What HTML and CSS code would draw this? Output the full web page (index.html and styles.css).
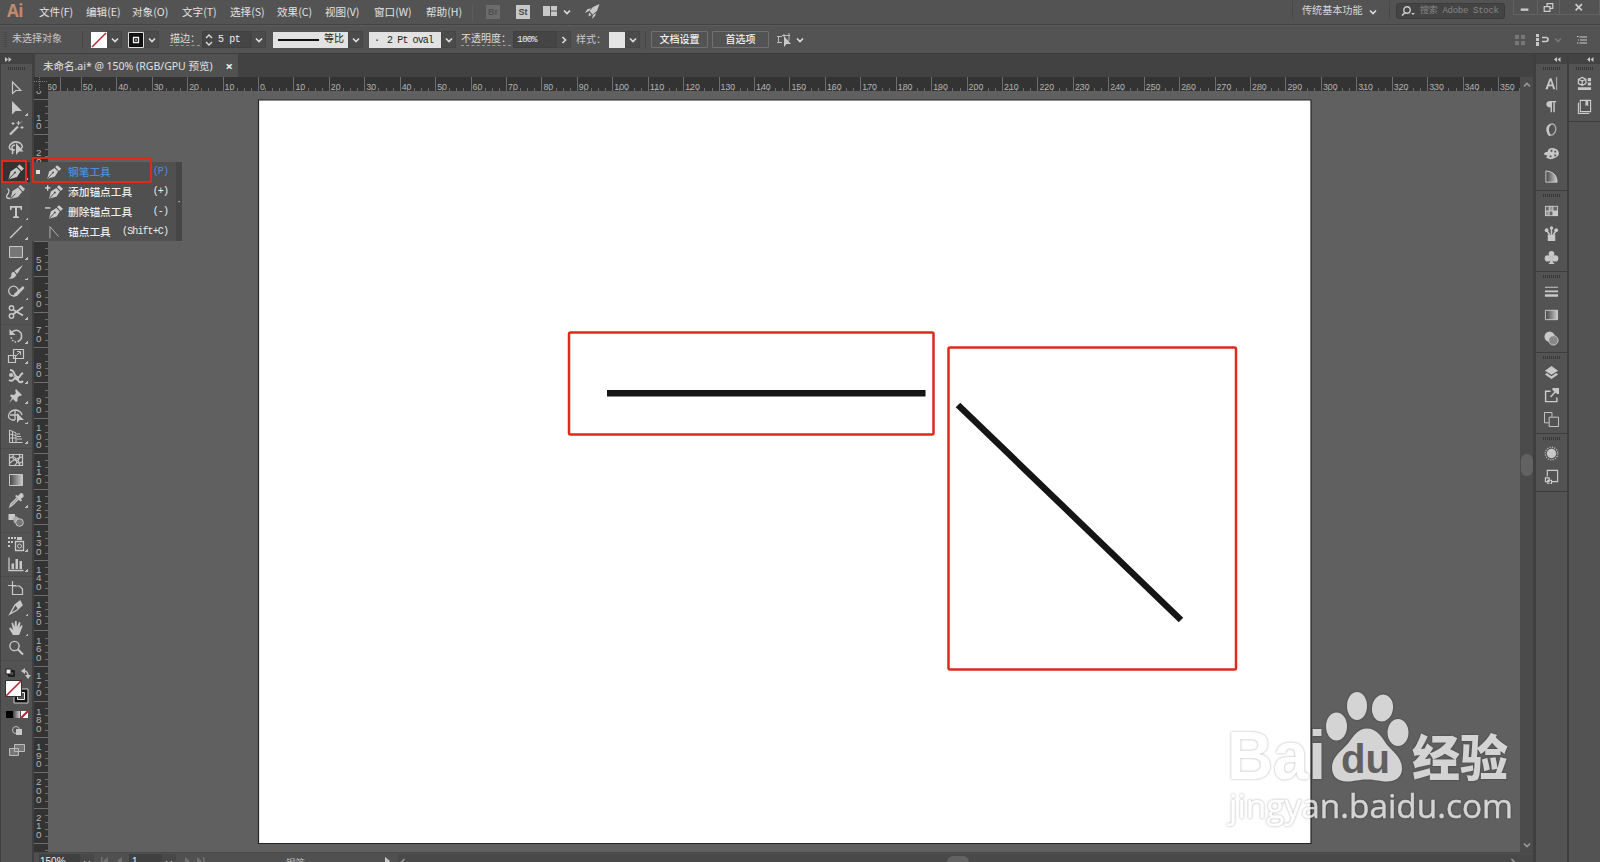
FILE: index.html
```html
<!DOCTYPE html>
<html lang="zh-CN">
<head>
<meta charset="utf-8">
<title>未命名.ai</title>
<link rel="stylesheet" href="styles.css">
</head>
<body>
<svg class="defs" width="0" height="0">
  <symbol id="chev" viewBox="0 0 8 8"><path d="M1 2.500 4 5.500 7 2.500" fill="none" stroke="currentColor" stroke-width="1.600"/></symbol>
  <symbol id="pen" viewBox="0 0 20 20"><path d="M2.500 17.500 4.500 9.500 10.500 5.500 14.500 9.500 11 15Z M11.300 4.500 13.500 2.500 18 6.500 15.500 9Z"/><path d="M3 17 8.500 11" stroke="#444" stroke-width="1"/><circle cx="9" cy="10.500" r="1" fill="#444"/></symbol>
</svg>
<div class="app">
  <header class="menubar">
    <b class="logo">Ai</b>
    <nav class="menus">
      <span class="m47">文件(F)</span><span class="m46">编辑(E)</span><span class="m50">对象(O)</span><span class="m48">文字(T)</span><span class="m47">选择(S)</span><span class="m48">效果(C)</span><span class="m49">视图(V)</span><span class="m52">窗口(W)</span><span class="m46">帮助(H)</span>
    </nav>
    <i class="vsep"></i>
    <span class="badge dim">Br</span>
    <span class="badge">St</span>
    <svg class="arrange" viewBox="0 0 14 10"><path d="M0 0h7v10H0zM8 0h6v4.500H8zM8 5.500h6V10H8z"/></svg>
    <svg class="chev arrange-chev"><use href="#chev"/></svg>
    <svg class="rocket" viewBox="0 0 15 15"><path d="M14.500 0 8 3 4.500 7 7.500 10.500 12 7ZM6 4 2 5.500 0 9 4 7ZM11 9 10 12 7 15 8 11ZM4 8.500 6.500 11 3.500 12.500Z"/></svg>
    <div class="workspace"><span>传统基本功能</span><svg class="chev"><use href="#chev"/></svg></div>
    <div class="search"><svg viewBox="0 0 14 10"><circle cx="6" cy="4" r="3.200" fill="none" stroke="#ccc" stroke-width="1.400"/><path d="M4 6.500 1 9.500" stroke="#ccc" stroke-width="1.600"/><path d="M10 7h4l-2 2z"/></svg><span>搜索 Adobe Stock</span></div>
    <div class="win">
      <svg class="min" viewBox="0 0 24 15"><path d="M7 8.500h8v2.500H7z"/></svg>
      <svg class="max" viewBox="0 0 22 15"><path d="M6.500 6.500h6v5h-6zM9.500 6V3.500h6v5H13" fill="none" stroke="#ccc" stroke-width="1.300"/></svg>
      <svg class="cls" viewBox="0 0 40 15"><path d="M16 4 22.500 10.500M22.500 4l-6.500 6.500" stroke="#ccc" stroke-width="1.700"/></svg>
    </div>
  </header>

  <section class="controls">
    <i class="drag"></i>
    <span class="selection">未选择对象</span>
    <i class="csep"></i>
    <svg class="swatch fill-swatch" viewBox="0 0 16 16"><path fill="#fff" d="M0 0h16v16H0z"/><path d="M1 15 15 1" stroke="#b8252b" stroke-width="1.500"/></svg>
    <span class="drop"><svg class="chev"><use href="#chev"/></svg></span>
    <svg class="swatch stroke-swatch" viewBox="0 0 16 16"><path fill="#111" stroke="#ddd" d="M.5.5h15v15H.5z"/><path fill="#111" stroke="#eee" stroke-width="1.300" d="M5.500 5.500h5v5h-5z"/><path d="M7 8h2" stroke="#ddd"/></svg>
    <span class="drop"><svg class="chev"><use href="#chev"/></svg></span>
    <span class="label weight-label">描边：</span>
    <div class="field weight"><svg viewBox="0 0 8 14"><path d="M1 5 4 2 7 5M1 9 4 12 7 9" fill="none" stroke="#ddd" stroke-width="1.400"/></svg><span>5 pt</span></div>
    <span class="drop"><svg class="chev"><use href="#chev"/></svg></span>
    <div class="light profile"><i></i><span>等比</span></div>
    <span class="drop"><svg class="chev"><use href="#chev"/></svg></span>
    <div class="light brush"><span>·</span><span>2 Pt oval</span></div>
    <span class="drop"><svg class="chev"><use href="#chev"/></svg></span>
    <span class="label opacity-label">不透明度：</span>
    <div class="field opacity">100%</div>
    <span class="drop"><svg class="chev turn"><use href="#chev"/></svg></span>
    <span class="style-label">样式：</span>
    <i class="style-swatch"></i>
    <span class="drop"><svg class="chev"><use href="#chev"/></svg></span>
    <i class="csep near"></i>
    <span class="btn first">文档设置</span>
    <span class="btn">首选项</span>
    <svg class="similar" viewBox="0 0 15 14"><path d="M0 3.500h5M0 9.500h5M1.500 3.500v6M5 2.500h8M7 1v3M12 0v5M12 5v3" fill="none" stroke="#bbb"/><path d="M7 3v11l2.500-3H14Z"/></svg>
    <svg class="chev similar-chev"><use href="#chev"/></svg>
    <div class="controls-right">
      <svg class="snap" viewBox="0 0 10 10"><path fill="#777" d="M0 0h4v4H0zM6 0h4v4H6zM0 6h4v4H0zM6 6h4v4H6z"/></svg>
      <svg class="dock-pos" viewBox="0 0 13 12"><path d="M0 0h3v3H0zM0 4h3v3H0zM0 8h3v4H0z"/><path d="M6 3.500h4q2 0 2 2t-2 2H6" fill="none" stroke="#ccc" stroke-width="1.600"/></svg>
      <svg class="chev faint"><use href="#chev"/></svg>
      <svg class="list" viewBox="0 0 10 8"><path d="M0 .5h1.500M2.500 1H10M1 4h1M3 4h7M0 7h1.500M2.500 7H10" stroke="#ccc" stroke-width="1.200"/></svg>
    </div>
  </section>

  <main class="body">
    <aside class="tools">
      <div class="head left"><svg viewBox="0 0 7 5"><path d="M0 0 3 2.500 0 5zM3.500 0l3 2.500-3 2.500z"/></svg></div>
      <div class="grip tool-grip"><i></i></div>
      <div class="group">
        <span class="tool"><svg viewBox="0 0 20 20"><path d="M6.500 4v11.500l3.300-3h5Z" fill="none" stroke="#c8c8c8" stroke-width="1.200"/></svg></span>
        <span class="tool more"><svg viewBox="0 0 20 20"><path d="M6 3v13.500l3.500-3.500H16Z"/></svg></span>
        <span class="tool"><svg viewBox="0 0 20 20"><path d="M4 16.500 12 8.500" stroke="#c8c8c8" stroke-width="2.200"/><path d="M12.500 3v4M10.500 5h4M16 8v3M14.500 9.500h3M7 4v3M5.500 5.500h3M16 3.500l-1 1" stroke="#c8c8c8"/></svg></span>
        <span class="tool"><svg viewBox="0 0 20 20"><path d="M9 12H6Q2 11 4 7q4-5 10-2 4 3 1 6M7 12q-3-4 2-5M5 11q3 2 1 5" fill="none" stroke="#c8c8c8" stroke-width="1.500"/><path d="M10 5v12l3-3.500h4.500Z"/></svg></span>
      </div>
      <div class="group">
        <span class="tool more on"><svg><use href="#pen"/></svg></span>
        <span class="tool"><svg viewBox="0 0 20 20"><path d="M1.500 6.500q3 2 0 6t3 4" fill="none" stroke="#c8c8c8" stroke-width="1.300"/><path d="M4.500 17 6.500 9 12 5.500 16 10 12 15ZM12.500 4.500l2-1.500L19 7 17 9.500Z"/><path d="M5 16.500l4.500-5" stroke="#444"/></svg></span>
        <span class="tool more"><svg viewBox="0 0 20 20"><path d="M4 4h12v4h-1.200l-.7-2.300H11V14l2 .7V16H7v-1.300L9 14V5.700H6L5.300 8H4Z"/></svg></span>
        <span class="tool more"><svg viewBox="0 0 20 20"><path d="M4 16 16 4" stroke="#c8c8c8" stroke-width="1.400"/></svg></span>
        <span class="tool more"><svg viewBox="0 0 20 20"><path d="M3.500 4.500h13v11h-13z" fill="#777" stroke="#c8c8c8"/></svg></span>
        <span class="tool more"><svg viewBox="0 0 20 20"><path d="M17 3 8.500 9l2.500 3ZM8 10l2.500 3Q8 17.500 2.500 16.500q3-1 2.800-4T8 10Z"/></svg></span>
        <span class="tool more"><svg viewBox="0 0 20 20"><circle cx="7.500" cy="9" r="4.800" fill="none" stroke="#c8c8c8" stroke-width="1.300"/><path d="M17 4 8.500 11.500 7 15l4-1L18.500 6Z"/></svg></span>
        <span class="tool more"><svg viewBox="0 0 20 20"><path d="M7.500 8 17 13.500M7.500 12 17 5" stroke="#c8c8c8" stroke-width="1.800"/><circle cx="5.500" cy="6" r="2.200" fill="none" stroke="#c8c8c8" stroke-width="1.400"/><circle cx="5.500" cy="14" r="2.200" fill="none" stroke="#c8c8c8" stroke-width="1.400"/></svg></span>
      </div>
      <div class="group">
        <span class="tool more"><svg viewBox="0 0 20 20"><path d="M6 6q5-4 9 1 2 5-2 8" fill="none" stroke="#c8c8c8" stroke-width="1.500"/><path d="M13 15q-6 3-8-4" fill="none" stroke="#c8c8c8" stroke-width="1.500" stroke-dasharray="1.500 1.500"/><path d="M3.500 3v6h6Z"/></svg></span>
        <span class="tool more"><svg viewBox="0 0 20 20"><path d="M2.500 9.500h7v7h-7zM7.500 3.500h10v9h-10z" fill="none" stroke="#c8c8c8" stroke-width="1.200"/><path d="M9 11l5-5M11 5.500h3.500V9" fill="none" stroke="#c8c8c8"/></svg></span>
        <span class="tool more"><svg viewBox="0 0 20 20"><path d="M4 4q3 0 4 3t3 4 3-1 3-3M3 14q3 2 5-1t4 1 5 1" fill="none" stroke="#c8c8c8" stroke-width="2"/><circle cx="5" cy="9" r="2"/><circle cx="11" cy="12.500" r="2"/><path d="M5 8l7 6" stroke="#c8c8c8"/></svg></span>
        <span class="tool more"><svg viewBox="0 0 20 20"><path d="M10 3l6 6-1.500 1-1-.3-2 2.300v3L10 16l-3-3-4 4 3-5-2-2 1-1.500 3 .5L10 7l-.8-2.500Z"/></svg></span>
        <span class="tool more"><svg viewBox="0 0 20 20"><path d="M9 14H6Q1 12 3 8q2-4 7-4 5 1 6 5M4 9h9M9 5v9" fill="none" stroke="#c8c8c8" stroke-width="1.300"/><path d="M11 7v10l2.500-3H18Z"/></svg></span>
        <span class="tool more"><svg viewBox="0 0 20 20"><path d="M3.500 4v12.500h13M3.500 4 10 7v9M3.500 8 10 9.500M3.500 12h7M6.500 5v11M11 8h3M11 10.500h4M11 13h5" fill="none" stroke="#c8c8c8"/></svg></span>
      </div>
      <div class="group">
        <span class="tool"><svg viewBox="0 0 20 20"><path d="M3.500 4.500h13v11h-13zM4 8q5-3 6 2t6 2M8 4q-3 4 1 6t-1 6M13 4q2 4-2 7M4 13q4-4 12-6M12 10l2 6" fill="none" stroke="#c8c8c8" stroke-width="1.200"/></svg></span>
        <span class="tool"><svg viewBox="0 0 20 20"><defs><linearGradient id="g"><stop stop-color="#444"/><stop offset="1" stop-color="#ccc"/></linearGradient></defs><path d="M3.500 4.500h13v11h-13z" fill="url(#g)" stroke="#c8c8c8"/></svg></span>
        <span class="tool more"><svg viewBox="0 0 20 20"><path d="M11 8 5 14l-1 2.500L6.500 15l6-6" fill="none" stroke="#c8c8c8" stroke-width="1.400"/><path d="M9 6l1.500-1L12 6q3-5 5-2t-2 4.500l1 2-1.500 1Z"/></svg></span>
        <span class="tool"><svg viewBox="0 0 20 20"><path d="M2.500 4h6.500v6H2.500z"/><path d="M7 8l3-2 4 3-1 5-5-1Z" fill="#aaa"/><circle cx="13.500" cy="12.500" r="3.800" fill="#777" stroke="#c8c8c8"/></svg></span>
      </div>
      <div class="group">
        <span class="tool more"><svg viewBox="0 0 20 20"><path d="M2 3h2v2H2zM5 3h2v2H5zM8 3h2v2H8zM2 7h2v2H2zM5 7h2v2H5zM2 11h2v2H2zM11 3h5v3h-5z"/><path d="M9.500 7.500h8v9h-8z" fill="none" stroke="#c8c8c8" stroke-width="1.300"/><circle cx="13.500" cy="12" r="2" fill="none" stroke="#c8c8c8"/></svg></span>
        <span class="tool more"><svg viewBox="0 0 20 20"><path d="M3 3.500v13h14.500" fill="none" stroke="#c8c8c8" stroke-width="1.300"/><path d="M5.500 9.500H8V15H5.500zM9.500 5H12v10H9.500zM13.500 7H16v8h-2.500z"/></svg></span>
      </div>
      <div class="group">
        <span class="tool"><svg viewBox="0 0 20 20"><path d="M6.500 3v11M2 7.500h8M6.500 8h7l3 3v5.500h-10Z" fill="none" stroke="#c8c8c8" stroke-width="1.200"/></svg></span>
        <span class="tool more"><svg viewBox="0 0 20 20"><path d="M4 16 9 7l5-4 2 4-5 5Z" fill="none" stroke="#c8c8c8" stroke-width="1.400"/><path d="M9 7l5-4 2 4-4 4Z"/></svg></span>
        <span class="tool more"><svg viewBox="0 0 20 20"><path d="M7 17 3 10.500l1.500-1L7 12 5.500 5l1.500-.4L8.500 9 9 3h1.600l.4 6L13 4l1.500.4L13.500 10l2-3 1.200.8L14 15l-1 2Z"/></svg></span>
        <span class="tool"><svg viewBox="0 0 20 20"><circle cx="8.500" cy="8" r="4.600" fill="none" stroke="#c8c8c8" stroke-width="1.400"/><path d="M11.500 11 17 16.500" stroke="#c8c8c8" stroke-width="2"/></svg></span>
      </div>
      <svg class="paint" viewBox="0 0 32 104">
        <path d="M5 7h5v5H5z" fill="#eee" stroke="#222"/><path d="M10 9h3v5H8v-2" fill="none" stroke="#111" stroke-width="1.500"/>
        <path d="M23 9q4 0 4 5" fill="none" stroke="#bbb" stroke-width="1.500"/><path d="M20 9l4-3v6zM24 13h6l-3 4z"/>
        <path d="M13 27h14v14H13z" fill="#111" stroke="#ccc"/><path d="M16.500 30.500h7v7h-7z" fill="#555" stroke="#eee"/>
        <path d="M4.500 18.500h16v16h-16z" fill="#fff" stroke="#333"/><path d="M5 34 20 19" stroke="#b8252b" stroke-width="1.600"/>
        <path d="M5 49h7v7H5z" fill="#000"/><path d="M12 49h7v7h-7z" fill="url(#g)"/><path d="M20 49h7v7h-7z" fill="#fff"/><path d="M20 56l7-7" stroke="#b8252b" stroke-width="2"/>
        <circle cx="15" cy="68" r="3.500" fill="none" stroke="#bbb"/><path d="M15 67h6v6h-6z"/>
        <path d="M8.500 86.500h9v7h-9zM13.500 82.500h10v7h-10z" fill="#777" stroke="#bbb"/>
      </svg>
    </aside>

    <section class="doc">
      <div class="tabs"><div class="tab"><span>未命名.ai* @ 150% (RGB/GPU 预览)</span><b>×</b></div></div>
      <div class="view">
        <svg class="corner" viewBox="0 0 14 14"><path d="M5.500 0v14M0 4.500h14" stroke="#777" stroke-dasharray="1 1"/></svg>
        <svg class="ruler-h" id="rulerH"></svg>
        <svg class="ruler-v" id="rulerV"></svg>
        <div class="canvas">
          <svg viewBox="48 91 1472 761">
            <path d="M258.500 100h1052.500v743.500H258.500z" fill="#fff" stroke="#252525" stroke-width="1.200"/>
            <path d="M607 393.200H925.500M958 405 1181 620" stroke="#151515" stroke-width="6.500"/>
            <g fill="none" stroke="#e0291b" stroke-width="2.500"><rect x="569" y="332.500" width="364.500" height="102" rx="1.500"/><rect x="948.500" y="347.500" width="287.500" height="322" rx="1.500"/></g>
          </svg>
        </div>
        <div class="vscroll"><svg class="chev up"><use href="#chev"/></svg><i></i><svg class="chev"><use href="#chev"/></svg></div>
      </div>
      <footer class="status">
        <span class="zoom">150%</span><span class="sdrop"><svg class="chev"><use href="#chev"/></svg></span>
        <svg class="prev" viewBox="0 0 30 8"><path fill="#707070" d="M0 0h1.500v8H0zM7 0v8L2 4zM21 0v8l-5-4z"/></svg>
        <span class="page">1</span><span class="sdrop"><svg class="chev"><use href="#chev"/></svg></span>
        <svg class="next" viewBox="0 0 30 8"><path fill="#707070" d="M0 0v8l5-4zM12 0v8l5-4zM18 0h1.500v8H18z"/></svg>
        <span class="current">钢笔</span>
        <svg class="play" viewBox="0 0 5 8"><path d="M0 0v8l5-4z"/></svg>
        <div class="hscroll"><svg class="chev back"><use href="#chev"/></svg><i></i><svg class="chev turn"><use href="#chev"/></svg></div>
      </footer>
    </section>

    <aside class="dock">
      <div class="head"><svg viewBox="0 0 7 5"><path d="M3 0v5L0 2.500zM6.500 0v5l-3-2.500z"/></svg></div>
      <div class="panel">
        <div class="grip"><i></i></div>
        <span><svg viewBox="0 0 16 16"><path d="M1.500 14 6 2.500h2L12 14H9.800l-1-3H5l-1 3ZM5.600 9h2.700L7 5Z"/><path d="M13.500 1v14" stroke="#bbb"/></svg></span>
        <span><svg viewBox="0 0 16 16"><path d="M13 2H6Q2.500 2.500 2.500 5.500T7 9v5h1.500V3.500H10V14h1.500V3.500H13Z"/></svg></span>
        <span><svg viewBox="0 0 16 16"><ellipse cx="8" cy="8" rx="4.500" ry="6" transform="rotate(12 8 8)" fill="none" stroke="#aaa" stroke-width="1.500"/><path d="M8 2Q1 3 3 10t4 4Q3 7 8 2Z"/></svg></span>
        <span><svg viewBox="0 0 16 16"><path fill-rule="evenodd" d="M8 2q6 0 7.500 4T13 12t-6 2-5-2l2-1.500L0 9q0-3 4-3 0-3.500 4-4ZM7 4v2h2V4ZM11 5v2h2V5ZM11 9v2h2V9ZM6 10v2h2v-2Z"/></svg></span>
        <span><svg viewBox="0 0 16 16"><path d="M2 2q12 1 12 12H2Z" fill="url(#g)" stroke="#ccc"/></svg></span>
      </div>
      <div class="panel">
        <div class="grip"><i></i></div>
        <span><svg viewBox="0 0 16 16"><path d="M1 3h14v11H1z"/><path fill="#666" d="M2 4h3v4H2zM10 4h4v4h-4zM6 9h3v4H6z"/><path fill="#999" d="M6 4h3v4H6zM2 9h3v4H2z"/></svg></span>
        <span><svg viewBox="0 0 16 16"><path d="M4 9h8v7H4z"/><path d="M8 9V2M6 9 3 5M10 9l3-4" stroke="#c8c8c8" stroke-width="1.600"/><circle cx="13" cy="4.500" r="2"/><circle cx="8" cy="2" r="1.800"/><circle cx="2.800" cy="4.500" r="2"/></svg></span>
        <span><svg viewBox="0 0 16 16"><circle cx="8" cy="4" r="3"/><circle cx="4" cy="9" r="3.300"/><circle cx="12" cy="9" r="3.300"/><path d="M7 5h2l.5 8 2 2h-7l2-2Z"/></svg></span>
      </div>
      <div class="panel">
        <div class="grip"><i></i></div>
        <span><svg viewBox="0 0 16 16"><path d="M1 3h14v1H1zM1 7h14v1.700H1zM1 11h14v2.500H1z"/></svg></span>
        <span><svg viewBox="0 0 16 16"><path d="M1.500 3.500h13v10h-13z" fill="url(#g)" stroke="#ccc"/></svg></span>
        <span><svg viewBox="0 0 16 16"><circle cx="6" cy="6" r="5.500"/><circle cx="10" cy="10" r="5" fill="#888" stroke="#ccc"/></svg></span>
      </div>
      <div class="panel">
        <div class="grip"><i></i></div>
        <span><svg viewBox="0 0 16 16"><path d="M8 1l7 5-7 4.500L1 6ZM1 10l2-1.500 5 3.500 5-3.500L15 10l-7 5Z"/></svg></span>
        <span><svg viewBox="0 0 16 16"><path d="M7 3.500H1.700v11h12V10M7 9.500 13 3" fill="none" stroke="#ccc" stroke-width="1.500"/><path d="M9 0h7v6.500h-2L9 2Z"/></svg></span>
        <span><svg viewBox="0 0 16 16"><path d="M5 11.500H.5v-11h8V5M5.500 5.500h10v10h-10z" fill="none" stroke="#ccc"/></svg></span>
      </div>
      <div class="panel">
        <div class="grip"><i></i></div>
        <span><svg viewBox="0 0 16 16"><circle cx="8" cy="8" r="5"/><circle cx="8" cy="8" r="6.700" fill="none" stroke="#bbb" stroke-width="1.300" stroke-dasharray="1.300 1.300"/></svg></span>
        <span><svg viewBox="0 0 16 16"><path d="M3.500 8V1.500h11v12H8M1.500 9.500h4v4h-4zM4 12h4v4H4z" fill="none" stroke="#ccc" stroke-width="1.200"/></svg></span>
      </div>
    </aside>
    <aside class="dock second">
      <div class="head"><svg viewBox="0 0 7 5"><path d="M3 0v5L0 2.500zM6.500 0v5l-3-2.500z"/></svg></div>
      <div class="panel">
        <div class="grip"><i></i></div>
        <span><svg viewBox="0 0 16 16"><path d="M5.500 1.500l4 2v4.500l-4 2-4-2V3.500ZM1.500 3.500l4 2 4-2M5.500 5.500V10" fill="none" stroke="#ccc" stroke-width="1.300"/><path d="M11.500 2H15v3.500h-3.500zM11.500 7H15v3h-3.500zM1 12h14v3H1z"/></svg></span>
        <span><svg viewBox="0 0 16 16"><path d="M3.500 1.500h11v12h-11zM1.500 4v11.500H13" fill="none" stroke="#ccc" stroke-width="1.200"/><path d="M9 2h3v6l-1.500-1.500L9 8Z"/></svg></span>
      </div>
    </aside>
  </main>

  <div class="flyout">
    <ul>
      <li class="current-tool"><i></i><svg><use href="#pen"/></svg><span>钢笔工具</span><em>(P)</em></li>
      <li><i></i><svg viewBox="0 0 20 20"><g transform="translate(2 0)"><use href="#pen" width="20" height="20"/></g><path d="M0 5.500h6M3 2.500v6" stroke="#ddd" stroke-width="1.400"/></svg><span>添加锚点工具</span><em>(+)</em></li>
      <li><i></i><svg viewBox="0 0 20 20"><g transform="translate(2 0)"><use href="#pen" width="20" height="20"/></g><path d="M0 5.500h6" stroke="#ddd" stroke-width="1.400"/></svg><span>删除锚点工具</span><em>(-)</em></li>
      <li><i></i><svg viewBox="0 0 20 20"><path d="M5.500 17V4L15 15" fill="none" stroke="#bbb"/></svg><span>锚点工具</span><em>(Shift+C)</em></li>
    </ul>
    <div class="tear">·</div>
  </div>
  <i class="mark mark-tool"></i>
  <i class="mark mark-item"></i>

  <svg class="watermark" viewBox="1220 685 300 145">
    <g class="wm-ink">
      <text class="wm-brand" x="1227" y="779" textLength="99" lengthAdjust="spacingAndGlyphs">Bai</text>
      <ellipse cx="1336.500" cy="726.500" rx="10.500" ry="14"/><ellipse cx="1357" cy="706" rx="10" ry="14"/><ellipse cx="1382.500" cy="708" rx="10.500" ry="13.500" transform="rotate(8 1382.500 708)"/><ellipse cx="1398" cy="732.500" rx="10.500" ry="13.500"/>
      <path d="M1367 728.500c9 0 14 7 19 15 5 7 16 13 16 25 0 9-7 13-15 13-7 0-12-2-20-2s-13 2-20 2c-9 0-15-5-15-14 0-11 10-17 16-24 6-8 10-15 19-15Z"/>
      <text class="wm-cn" x="1412" y="776" textLength="96" lengthAdjust="spacingAndGlyphs">经验</text>
      <text class="wm-url" x="1229" y="818" textLength="284" lengthAdjust="spacingAndGlyphs">jingyan.baidu.com</text>
    </g>
    <text class="wm-du" x="1341" y="773" textLength="49" lengthAdjust="spacingAndGlyphs">du</text>
  </svg>
</div>
<script src="rulers.js"></script>
</body>
</html>
```

FILE: styles.css
```css
* { box-sizing: border-box; }
body { margin: 0; background: #535353; }
i, em { font-style: normal; }
svg { display: block; fill: #c8c8c8; flex: none; }
.defs { position: absolute; }

.app {
  position: relative;
  display: flex;
  flex-direction: column;
  width: 1600px;
  height: 862px;
  overflow: hidden;
  background: #535353;
  color: #d8d8d8;
  font: 11px/14px "Liberation Sans", "Noto Sans CJK SC", sans-serif;
  white-space: nowrap;
}
.chev { width: 8px; height: 8px; color: #ddd; }
.turn { transform: rotate(-90deg); }
.back { transform: rotate(90deg); }
.up { transform: rotate(180deg); }

/* Menu bar */
.menubar { display: flex; align-items: center; height: 25px; flex: none; border-bottom: 1px solid #424242; }
.logo { width: 32px; margin-top: -3px; padding-left: 7px; color: #c08a6c; font: bold 17px/22px "Open Sans", sans-serif; letter-spacing: -.5px; }
.menus { display: flex; margin: -1px 0 0 7px; font-family: "Noto Sans CJK SC", sans-serif; color: #e2e2e2; font-size: 10.600px; }
.m46 { width: 46px; } .m47 { width: 47px; } .m48 { width: 48px; } .m49 { width: 49px; } .m50 { width: 50px; } .m52 { width: 52px; }
.vsep { width: 1px; height: 17px; background: #484848; border-right: 1px solid #5b5b5b; }
.badge { width: 14px; height: 14px; margin-left: 13px; background: #c8c8c8; color: #444; text-align: center; font: bold 9px/14px "Liberation Sans", sans-serif; }
.badge + .badge { margin-left: 16px; }
.badge.dim { background: #6c6c6c; color: #505050; }
.arrange { width: 14px; height: 10px; margin: -2px 0 0 13px; }
.arrange-chev { margin: -1px 0 0 6px; }
.rocket { width: 15px; height: 15px; margin: -1px 0 0 14px; }
.workspace { display: flex; align-items: center; gap: 6px; height: 18px; width: 98px; margin: -4px 0 0 auto; padding-left: 9px; border-left: 1px solid #484848; border-right: 1px solid #484848; font: 10.100px/14px "Noto Sans CJK SC", sans-serif; }
.workspace .chev { margin-top: 3px; }
.search { display: flex; align-items: center; gap: 5px; width: 109px; height: 16px; margin: -2px 8px 0 6px; padding-left: 4px; background: #444; border: 1px solid #3b3b3b; border-radius: 3px; color: #858585; font: 9px/12px "Liberation Mono", "Noto Sans CJK SC", monospace; letter-spacing: -.3px; }
.search svg { width: 14px; height: 10px; }
.win { display: flex; align-self: flex-start; height: 15px; width: 88px; border: 1px solid #626262; border-top: 0; margin-right: -1px; }
.min, .max, .cls { height: 15px; border-right: 1px solid #626262; }
.min { width: 24px; } .max { width: 22px; } .cls { width: 40px; }

/* Control bar */
.controls { display: flex; align-items: center; height: 29px; flex: none; border-top: 1px solid #5b5b5b; border-bottom: 1px solid #3d3d3d; }
.drag { width: 3px; height: 16px; margin-left: 4px; background: repeating-linear-gradient(#484848 0 1px, transparent 1px 2px); }
.selection { width: 70px; margin-left: 5px; color: #c8c8c8; font-size: 10px; margin-top: -2px; }
.csep { width: 1px; height: 18px; background: #484848; }
.csep.near { margin-left: 5px; }
.swatch { width: 16px; height: 16px; }
.fill-swatch { margin-left: 8px; }
.stroke-swatch { margin-left: 6px; }
.drop { display: flex; align-items: center; justify-content: center; width: 15px; height: 17px; background: #4b4b4b; border: 1px solid #464646; }
.label { color: #ddd; font-size: 10px; border-bottom: 1px dashed #999; line-height: 12px; }
.weight-label { width: 30px; margin-left: 11px; }
.field { display: flex; align-items: center; height: 17px; background: #454545; border: 1px solid #404040; color: #eee; font: 10px/13px "Liberation Mono", monospace; }
.weight { width: 49px; margin-left: 2px; gap: 5px; padding-left: 2px; letter-spacing: -.4px; }
.weight svg { width: 8px; height: 14px; }
.light { display: flex; align-items: center; height: 16px; background: #e2e2e2; color: #222; font: 10px/14px "Liberation Mono", "Noto Sans CJK SC", monospace; }
.profile { width: 75px; margin-left: 7px; padding-left: 5px; gap: 5px; }
.profile i { width: 41px; height: 2px; background: #111; }
.brush { width: 72px; margin-left: 6px; padding: 2px 0 0 5px; gap: 8px; font: 10px/14px "Liberation Mono", monospace; letter-spacing: -.9px; }
.brush span + span { letter-spacing: -.9px; }
.opacity-label { width: 50px; margin-left: 5px; font-size: 10px; }
.opacity { width: 43px; margin-left: 2px; padding-left: 3px; font-size: 9.500px; letter-spacing: -.8px; }
.style-label { width: 30px; margin-left: 5px; color: #c8c8c8; font-size: 10px; }
.style-swatch { width: 16px; height: 16px; margin-left: 3px; background: #e4e4e4; }
.btn { width: 57px; height: 17px; margin-left: 4px; border: 1px solid #707070; border-radius: 1px; color: #f0f0f0; font-size: 10px; font-weight: 500; line-height: 16px; text-align: center; }
.btn.first { margin-left: 5px; }
.similar { width: 15px; height: 14px; margin-left: 8px; }
.similar-chev { margin-left: 4px; }
.controls-right { display: flex; align-items: center; margin-left: auto; padding-right: 13px; }
.snap { width: 10px; height: 10px; }
.dock-pos { width: 13px; height: 12px; margin-left: 11px; }
.faint { color: #777; margin-left: 5px; }
.list { width: 10px; height: 8px; margin-left: 15px; }

/* Body */
.body { display: flex; flex: 1; min-height: 0; background: #3f3f3f; }
.tools { width: 34px; background: #535353; border-left: 1px solid #404040; border-right: 2px solid #404040; }
.head { display: flex; align-items: center; justify-content: flex-end; height: 10px; padding-right: 6px; background: #434343; }
.head.left { justify-content: flex-start; padding-left: 4px; }
.head svg { width: 7px; height: 5px; }
.grip { display: flex; align-items: center; justify-content: center; height: 8px; }
.grip i { width: 17px; height: 3px; background: repeating-linear-gradient(90deg, #383838 0 1px, transparent 1px 2px); }
.tool-grip { margin-bottom: 6px; }
.group { padding-bottom: 2px; margin-bottom: 1px; border-bottom: 1px solid #4b4b4b; }
.tool { display: flex; align-items: center; justify-content: flex-end; height: 20px; padding-right: 5px; }
.tool svg { width: 20px; height: 20px; margin-right: 1px; }
.more { background: linear-gradient(135deg, transparent 50%, #bbb 50%) 24px 15px / 3px 3px no-repeat; }
.on { background-color: #333; }
.paint { width: 32px; height: 104px; }
.doc { display: flex; flex-direction: column; width: 1499px; height: 818px; flex: none; }
.tabs { height: 23px; padding-left: 1px; background: #424242; flex: none; }
.tab { display: flex; align-items: center; justify-content: space-between; width: 203px; height: 23px; padding: 0 5px 0 8px; background: #515151; color: #e0e0e0; font: 10.500px/14px "Noto Sans", "Noto Sans CJK SC", sans-serif; }
.tab b { font-size: 13px; color: #eee; }
.view { display: grid; grid-template: 14px 761px / 14px 1472px 13px; flex: none; }
.corner, .ruler-h, .ruler-v { width: 100%; height: 100%; background: #333; overflow: hidden; }
.ruler-h, .ruler-v { fill: #b4b4b4; font: 9.800px "Liberation Sans", sans-serif; }
.ruler-h path, .ruler-v path { fill: none; stroke: #6e6e6e; stroke-width: 1; shape-rendering: crispEdges; }
.corner { grid-area: 1 / 1; }
.ruler-h { grid-area: 1 / 2; }
.ruler-v { grid-area: 2 / 1; }
.canvas { grid-area: 2 / 2; background: #606060; }
.canvas svg { width: 1472px; height: 761px; }
.vscroll { grid-area: 1 / 3 / 3 / 4; display: flex; flex-direction: column; align-items: center; justify-content: space-between; padding: 4px 0 3px; background: #4b4b4b; }
.vscroll .chev, .hscroll .chev { color: #999; }
.vscroll i { width: 12px; height: 22px; border-radius: 6px; background: #626262; }
.status { display: flex; align-items: center; height: 20px; flex: none; background: #505050; border-top: 1px solid #484848; font: 10px/14px "Liberation Sans", "Noto Sans CJK SC", sans-serif; }
.zoom { width: 41px; margin-left: 5px; padding-left: 1px; height: 18px; line-height: 16px; background: #404040; color: #eee; }
.sdrop { display: flex; justify-content: center; align-items: center; width: 14px; height: 18px; background: #484848; }
.prev { width: 30px; height: 8px; margin: -3px 0 0 7px; }
.page { width: 33px; height: 18px; margin-left: -2px; padding-left: 3px; line-height: 16px; background: #404040; color: #eee; }
.next { width: 30px; height: 8px; margin: -3px 0 0 9px; }
.current { width: 170px; margin-top: 1px; padding-left: 71px; font-size: 9.500px; color: #bbb; }
.play { width: 5px; height: 8px; margin-top: -3px; }
.hscroll { display: flex; align-items: center; justify-content: space-between; flex: 1; height: 18px; margin-left: 8px; padding: 0 16px 2px 1px; background: #494949; }
.hscroll i { width: 22px; height: 12px; border-radius: 6px; background: #626262; }

/* Panel docks */
.dock { width: 31px; margin-left: 3px; background: #535353; }
.dock.second { width: 31px; margin-left: 2px; }
.panel { padding-bottom: 2px; border-bottom: 1px solid #3d3d3d; }
.panel span { display: flex; align-items: center; justify-content: center; height: 23.300px; }
.panel svg { width: 15px; height: 15px; margin-top: -1px; }

/* Pen tool flyout */
.flyout { position: absolute; left: 30px; top: 162px; display: flex; width: 152px; height: 79px; background: #505050; }
.flyout ul { flex: 1; margin: 0; padding: 0; list-style: none; }
.flyout li { display: flex; align-items: center; height: 20px; padding: 0 8px 0 6px; color: #ececec; font-size: 10.700px; font-weight: 500; }
.flyout li > i { width: 4px; height: 4px; margin-right: 5px; }
.flyout svg { width: 18px; height: 18px; margin-right: 5px; fill: #ccc; }
.flyout em { margin-left: auto; font: 10px/14px "Liberation Mono", monospace; letter-spacing: -.9px; }
.current-tool > i { background: #ddd; }
.flyout .current-tool { color: #4a8fdc; }
.tear { width: 6px; background: #464646; color: #ddd; line-height: 79px; text-align: center; }
.mark { position: absolute; border: 2px solid #e0291b; border-radius: 1px; }
.mark-tool { left: 1px; top: 160px; width: 26px; height: 23px; }
.mark-item { left: 32px; top: 157px; width: 120px; height: 26px; }

/* Watermark */
.watermark { position: absolute; left: 1220px; top: 685px; width: 300px; height: 145px; }
.wm-ink { fill: #fff; opacity: .73; filter: drop-shadow(0 0 1px rgba(0, 0, 0, .45)); }
.wm-brand { font: bold 68px "Liberation Sans", sans-serif; }
.wm-cn { font: 900 49px "Noto Sans CJK SC", sans-serif; }
.wm-url { font: 32px "Open Sans", sans-serif; stroke: #fff; stroke-width: .4px; }
.wm-du { font: bold 41px "Liberation Sans", sans-serif; fill: #606060; }
```

FILE: rulers.js
```js
// Ruler ticks: one labelled division is 10 mm, split into five.
const STEP = 35.43;
const H_ZERO = 210.5;
const V_ZERO = 8.5;

function horizontal() {
  let ticks = '', labels = '';
  for (let n = -5; n <= 35; n++) {
    const x = H_ZERO + n * STEP;
    ticks += `M${x} 0V14`;
    for (let k = 1; k < 5; k++) ticks += `M${x + k * STEP / 5} 11V14`;
    labels += `<text x="${x + 1.5}" y="12.5" textLength="${String(Math.abs(n * 10)).length * 4.9}" lengthAdjust="spacingAndGlyphs">${Math.abs(n * 10)}</text>`;
  }
  ticks += 'M5 11V14M12 0V14M19 11V14M26 11V14';
  labels += '<text x="-1" y="12.5" textLength="9.8" lengthAdjust="spacingAndGlyphs">60</text>';
  document.getElementById('rulerH').innerHTML = `<path d="${ticks}"/>${labels}`;
}

function vertical() {
  let ticks = '', labels = '';
  for (let n = 0; n <= 21; n++) {
    const y = V_ZERO + n * STEP;
    ticks += `M0 ${y}H14`;
    for (let k = 1; k < 5; k++) ticks += `M11 ${y + k * STEP / 5}H14`;
    const digits = String(n * 10).split('');
    digits.forEach((d, i) => {
      labels += `<text x="2" y="${y - 5.5 - (digits.length - 1 - i) * 8.6}">${d}</text>`;
    });
  }
  document.getElementById('rulerV').innerHTML = `<path d="${ticks}"/>${labels}`;
}

horizontal();
vertical();
```
